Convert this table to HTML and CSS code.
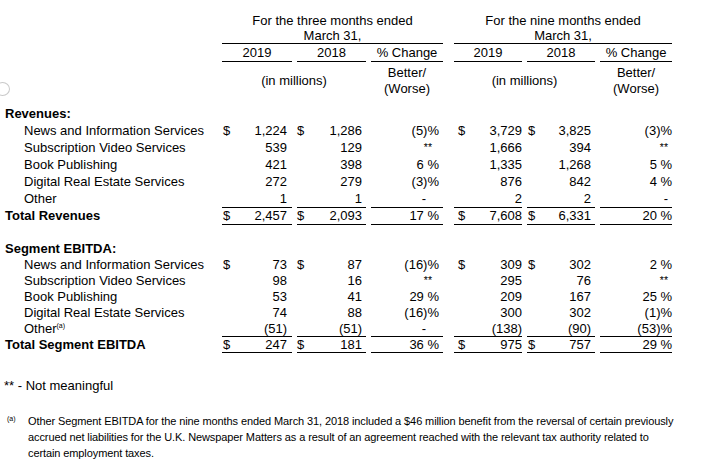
FILE: index.html
```html
<!DOCTYPE html>
<html>
<head>
<meta charset="utf-8">
<link rel="stylesheet" href="styles.css">
</head>
<body>
<div class="page">
  <span class="ring"></span>
  <table class="fin">
    <colgroup>
      <col class="w-lbl"><col class="w-a"><col class="w-b"><col class="w-p"><col class="w-sp"><col class="w-c"><col class="w-d"><col class="w-q">
    </colgroup>
    <thead>
      <tr class="h1">
        <th></th>
        <th colspan="3" class="u">For the three months ended<br>March 31,</th>
        <th class="sp"></th>
        <th colspan="3" class="u">For the nine months ended<br>March 31,</th>
      </tr>
      <tr class="h2">
        <th></th>
        <th class="u">2019</th><th class="u">2018</th><th class="u">% Change</th>
        <th class="sp"></th>
        <th class="u">2019</th><th class="u">2018</th><th class="u">% Change</th>
      </tr>
      <tr class="h3">
        <th></th>
        <th colspan="2">(in millions)</th><th>Better/<br>(Worse)</th>
        <th class="sp"></th>
        <th colspan="2">(in millions)</th><th>Better/<br>(Worse)</th>
      </tr>
    </thead>
    <tbody class="rev">
      <tr><td class="hd" colspan="8">Revenues:</td></tr>
      <tr><td class="lbl">News and Information Services</td><td><span class="cur">$</span>1,224</td><td><span class="cur">$</span>1,286</td><td>(5)%</td><td class="sp"></td><td><span class="cur">$</span>3,729</td><td><span class="cur">$</span>3,825</td><td>(3)%</td></tr>
      <tr><td class="lbl">Subscription Video Services</td><td>539</td><td>129</td><td><span class="na">**</span></td><td class="sp"></td><td>1,666</td><td>394</td><td><span class="na">**</span></td></tr>
      <tr><td class="lbl">Book Publishing</td><td>421</td><td>398</td><td>6 %</td><td class="sp"></td><td>1,335</td><td>1,268</td><td>5 %</td></tr>
      <tr><td class="lbl">Digital Real Estate Services</td><td>272</td><td>279</td><td>(3)%</td><td class="sp"></td><td>876</td><td>842</td><td>4 %</td></tr>
      <tr class="ul"><td class="lbl">Other</td><td>1</td><td>1</td><td><span class="dash">-</span></td><td class="sp"></td><td>2</td><td>2</td><td><span class="dash">-</span></td></tr>
      <tr class="ul"><td class="hd">Total Revenues</td><td><span class="cur">$</span>2,457</td><td><span class="cur">$</span>2,093</td><td>17 %</td><td class="sp"></td><td><span class="cur">$</span>7,608</td><td><span class="cur">$</span>6,331</td><td>20 %</td></tr>
      <tr class="gap"><td colspan="8"></td></tr>
    </tbody>
    <tbody class="seg">
      <tr><td class="hd" colspan="8">Segment EBITDA:</td></tr>
      <tr><td class="lbl">News and Information Services</td><td><span class="cur">$</span>73</td><td><span class="cur">$</span>87</td><td>(16)%</td><td class="sp"></td><td><span class="cur">$</span>309</td><td><span class="cur">$</span>302</td><td>2 %</td></tr>
      <tr><td class="lbl">Subscription Video Services</td><td>98</td><td>16</td><td><span class="na">**</span></td><td class="sp"></td><td>295</td><td>76</td><td><span class="na">**</span></td></tr>
      <tr><td class="lbl">Book Publishing</td><td>53</td><td>41</td><td>29 %</td><td class="sp"></td><td>209</td><td>167</td><td>25 %</td></tr>
      <tr><td class="lbl">Digital Real Estate Services</td><td>74</td><td>88</td><td>(16)%</td><td class="sp"></td><td>300</td><td>302</td><td>(1)%</td></tr>
      <tr class="ul"><td class="lbl">Other<sup class="sup">(a)</sup></td><td>(51)</td><td>(51)</td><td><span class="dash">-</span></td><td class="sp"></td><td>(138)</td><td>(90)</td><td>(53)%</td></tr>
      <tr class="ul"><td class="hd">Total Segment EBITDA</td><td><span class="cur">$</span>247</td><td><span class="cur">$</span>181</td><td>36 %</td><td class="sp"></td><td><span class="cur">$</span>975</td><td><span class="cur">$</span>757</td><td>29 %</td></tr>
    </tbody>
  </table>

  <p class="notmean">** - Not meaningful</p>

  <div class="fn">
    <span class="fnmark">(a)</span>
    <p class="fntext">Other Segment EBITDA for the nine months ended March 31, 2018 included a $46 million benefit from the reversal of certain previously<br>accrued net liabilities for the U.K. Newspaper Matters as a result of an agreement reached with the relevant tax authority related to<br>certain employment taxes.</p>
  </div>
</div>
</body>
</html>
```

FILE: styles.css
```css
* { box-sizing: content-box; }

body {
  margin: 0;
  background: #fff;
  color: #000;
  font-family: "Liberation Sans", Arial, sans-serif;
  font-size: 13px;
}

.page {
  position: relative;
  padding-top: 13px;
  width: 709px;
  height: 471px;
  overflow: hidden;
}

.ring {
  position: absolute;
  left: -5px;
  top: 82px;
  width: 13px;
  height: 12px;
  border: 1px solid #c9c9c9;
  border-radius: 50%;
}

.fin {
  table-layout: fixed;
  width: 677px;
  border-collapse: separate;
  border-spacing: 5px 0;
}

.w-lbl { width: 212px; }
.w-a { width: 70px; }
.w-b { width: 69px; }
.w-p { width: 72px; }
.w-sp { width: 1px; }
.w-c { width: 68px; }
.w-d { width: 68px; }
.w-q { width: 72px; }

.fin th,
.fin td {
  padding: 0;
  font-weight: normal;
  border-bottom: 1px solid transparent;
  white-space: nowrap;
}

.fin th {
  text-align: center;
}

.fin .u {
  border-bottom-color: #000;
}

.h1 th { line-height: 15px; }
.h2 th { line-height: 17px; }
.h3 th {
  line-height: 16px;
  padding: 3px 0 8px;
  vertical-align: middle;
}

.rev td { line-height: 16px; }
.seg td { line-height: 15px; }

.fin tbody td { text-align: right; }
.fin tbody td.hd,
.fin tbody td.lbl { text-align: left; }

.fin td.hd { font-weight: bold; }
.fin td.lbl { padding-left: 19px; }

.fin tbody td:nth-child(2) { padding: 0 5px 0 1px; }
.fin tbody td:nth-child(3) { padding: 0 4px 0 0; }
.fin tbody td:nth-child(4) { padding: 0 4px 0 0; }
.fin tbody td:nth-child(6) { padding: 0 0 0 4px; }
.fin tbody td:nth-child(7) { padding: 0 4px 0 1px; }
.fin tbody td:nth-child(8) { padding: 0; }
.fin tbody td.lbl:first-child { padding-left: 19px; }
.fin tbody td.hd:first-child { padding-left: 0; }

.fin tr.ul td:not(.lbl):not(.hd):not(.sp) {
  border-bottom-color: #000;
}

.gap td { height: 15px; }

.cur { float: left; }

.na {
  display: inline-block;
  font-size: 10.5px;
  line-height: 10px;
  vertical-align: 1px;
}
.dash { display: inline-block; }

td:nth-child(4) .na { padding-right: 7px; }
td:nth-child(8) .na { padding-right: 4px; }
td:nth-child(4) .dash { padding-right: 13px; }
td:nth-child(8) .dash { padding-right: 4px; }

.sup {
  font-size: 7px;
  line-height: 0;
  vertical-align: 5px;
}

.notmean {
  margin: 25px 0 0 4px;
  line-height: 16px;
}

.fn {
  display: flex;
  margin-top: 19px;
}

.fnmark {
  width: 21px;
  padding-left: 7px;
  font-size: 7px;
  line-height: 12px;
}

.fntext {
  margin: 0;
  width: 670px;
  font-size: 11px;
  letter-spacing: -0.1px;
  line-height: 16px;
  white-space: nowrap;
}
```
